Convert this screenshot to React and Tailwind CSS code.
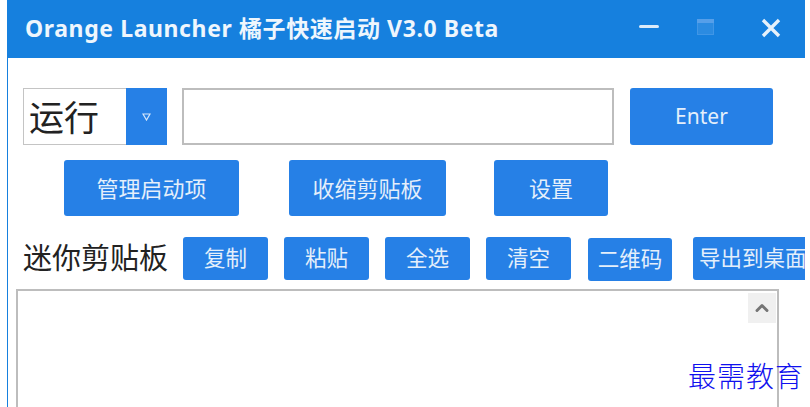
import { ChevronUp } from 'lucide-react'

const FONT = "font-['Noto_Sans','Noto_Sans_CJK_SC',sans-serif]"
const BTN = 'flex items-center justify-center rounded-[3px] bg-[#2680e6] text-[#e4effb] whitespace-nowrap shrink-0'

const TOOLS = [
  { label: '复制', className: 'w-[85px] ml-[17px]' },
  { label: '粘贴', className: 'w-[85px] ml-4' },
  { label: '全选', className: 'w-[85px] ml-4' },
  { label: '清空', className: 'w-[85px] ml-4' },
  { label: '二维码', className: 'w-[84px] ml-[17px] mt-px' },
  { label: '导出到桌面', className: 'w-[125px] ml-[21px] !justify-start pl-[6px]' },
]

function TitleBar() {
  return (
    <div className="flex h-[58px] items-center bg-[#1680de] pl-[17px] text-white">
      <span className="text-[23px] leading-none font-bold text-[#eef6fd] tracking-[0.6px] mt-[-2px] whitespace-nowrap">
        Orange Launcher 橘子快速启动 V3.0 Beta
      </span>
      <div className="ml-auto flex items-center">
        <div className="h-[3px] w-5 rounded-sm bg-[#dcebf9] mt-[-5px]" />
        <svg width="17" height="16" viewBox="0 0 17 16" className="ml-[38px] mt-[-4px]">
          <rect x="0.5" y="0.5" width="16" height="15" fill="#2b8be1" stroke="#4096e6" />
          <rect x="0" y="0" width="17" height="4" fill="#569fe9" />
        </svg>
        <svg width="20" height="20" viewBox="0 0 20 20" className="ml-[47px] mr-6 mt-[-3px]">
          <path d="M2 2 L18 18 M18 2 L2 18" stroke="#e6f1fb" strokeWidth="3.4" />
        </svg>
      </div>
    </div>
  )
}

function RunRow() {
  return (
    <div className="flex h-[57px] pl-[15px]">
      <div className="flex w-[144px] border border-[#c4c4c4] bg-white">
        <span className="flex-1 pl-[5px] text-[35px] leading-[57px] text-[#222] whitespace-nowrap">运行</span>
        <div className="flex w-[41px] items-center justify-center bg-[#2680e6] -my-px -mr-px">
          <svg width="9" height="8" viewBox="0 0 9 8">
            <path d="M1 1 H8 L4.5 7 Z" fill="none" stroke="#d5e6fa" strokeWidth="1.2" />
          </svg>
        </div>
      </div>
      <div className="ml-[15px] w-[432px] border-2 border-[#bdbdbd] bg-white" />
      <div className={`${BTN} ml-4 w-[143px] text-[21px]`}>Enter</div>
    </div>
  )
}

function ActionRow() {
  return (
    <div className="mt-[15px] flex h-[56px] pl-[56px] text-[22px]">
      <div className={`${BTN} w-[175px]`}>管理启动项</div>
      <div className={`${BTN} ml-[50px] w-[157px]`}>收缩剪贴板</div>
      <div className={`${BTN} ml-[48px] w-[114px]`}>设置</div>
    </div>
  )
}

function ClipboardBar() {
  return (
    <div className="mt-[21px] flex h-[44px] items-start overflow-hidden pl-[15px] text-[21.5px]">
      <span className="w-[143px] shrink-0 text-[29px] leading-[42px] text-[#222] whitespace-nowrap">迷你剪贴板</span>
      {TOOLS.map(t => (
        <div key={t.label} className={`${BTN} h-[43px] ${t.className}`}>{t.label}</div>
      ))}
    </div>
  )
}

export default function App() {
  return (
    <div className={`relative h-[407px] w-[810px] overflow-hidden bg-white ${FONT}`}>
      <div className="mr-[5px] ml-[7px] h-full border-l-[1.5px] border-[#1680de]">
        <TitleBar />
        <div className="pt-[30px]">
          <RunRow />
          <ActionRow />
          <ClipboardBar />
          {/* 剪贴板 내용 */}
          <div className="mt-[8px] ml-[8px] flex h-[130px] w-[763px] justify-end border-2 border-[#bdbdbd] pt-[2px] pr-[1px]">
            <div className="flex h-[30px] w-[28px] items-center justify-center bg-[#f0f0f0]">
              <ChevronUp size={20} strokeWidth={3.5} color="#757575" />
            </div>
          </div>
        </div>
      </div>
      <span className="absolute top-[358px] left-[688px] text-[28px] leading-[36px] font-light tracking-[1px] text-[#1010ee] whitespace-nowrap">最需教育</span>
    </div>
  )
}
